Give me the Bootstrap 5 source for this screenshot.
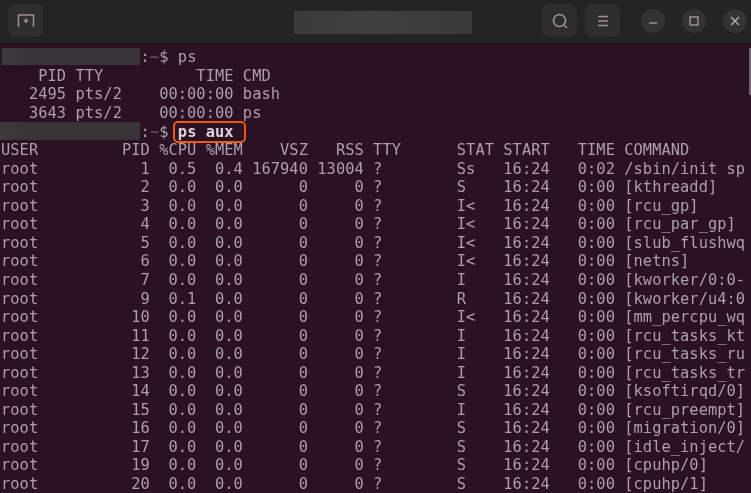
<!DOCTYPE html>
<html lang="en">
<head>
<meta charset="utf-8">
<title>Terminal</title>
<link rel="stylesheet" href="https://cdn.jsdelivr.net/npm/bootstrap@5.3.0/dist/css/bootstrap.min.css">
<style>
html,body{height:493px;overflow:hidden;background:#2b1124;}
.term-win{width:751px;height:493px;background:#2b1124;overflow:hidden;position:relative;}
.title-bar{height:44px;background:#242424;border-bottom:1px solid #1c1a1c;padding:4px 4px 0 8px;}
.tool-btn{width:35px;height:33px;border-radius:7px;background:#2e2e2e;}
.win-btn{width:24px;height:24px;border-radius:50%;background:#333333;margin-left:9px;}
.win-first{margin-left:13px;}
.title-mask{width:178px;height:23px;margin:7px 0 0 251px;background:linear-gradient(90deg,#3b3b3b,#3f3f3f 45%,#3a3a3a);}
.term-body{padding:4.4px 0 0 1px;height:449px;overflow:hidden;font-family:"DejaVu Sans Mono","Liberation Mono",monospace;font-size:15.36px;letter-spacing:.055px;line-height:18.56px;color:#ad9fab;filter:blur(.5px);}
.term-line{height:18.56px;white-space:pre;}
.prompt-gap{margin-left:139.6px;}
.dim-tilde{color:#6f5f6d;}
.mask-a{position:absolute;left:2px;top:48px;width:138px;height:17px;background:linear-gradient(90deg,#3d3a3c,#3a3337 25%,#3a3337);}
.mask-b{position:absolute;left:0;top:122px;width:140px;height:18px;background:linear-gradient(90deg,#3d3a3c,#3a3337 25%,#3a3337);}
.cmd-box{position:absolute;left:173px;top:121px;width:73px;height:22px;border:2px solid #f05a14;border-radius:5px;}
.cmd-hi{color:#ded3db;font-weight:700;}
.scroll-thumb{position:absolute;right:0;top:48px;width:2px;height:47px;background:#6d6670;}
</style>
</head>
<body>
<div class="term-win">
  <header class="title-bar d-flex align-items-start">
    <div class="tool-btn d-flex align-items-center justify-content-center">
      <svg width="20" height="18" viewBox="0 0 20 18" fill="none" stroke="#9e8f9a" stroke-width="1.5"><path d="M2.5 15V3h15v12"/><path d="M10 6.5v4.5M7.7 8.7h4.6"/></svg>
    </div>
    <div class="title-mask"></div>
    <div class="d-flex align-items-center gap-2 ms-auto">
      <div class="tool-btn d-flex align-items-center justify-content-center"><svg width="18" height="18" viewBox="0 0 18 18" fill="none" stroke="#a08f9b" stroke-width="1.6"><circle cx="8.5" cy="8.5" r="6"/><path d="M13 13l3 3"/></svg></div>
      <div class="tool-btn d-flex align-items-center justify-content-center"><svg width="14" height="14" viewBox="0 0 14 14" fill="none" stroke="#a08f9b" stroke-width="1.5"><path d="M2 2.5h10M2 7h10M2 11.5h10"/></svg></div>
      <div class="win-btn win-first d-flex align-items-center justify-content-center"><svg width="12" height="12" viewBox="0 0 12 12" fill="none" stroke="#a08f9b" stroke-width="1.5"><path d="M2 8h8"/></svg></div>
      <div class="win-btn d-flex align-items-center justify-content-center"><svg width="12" height="12" viewBox="0 0 12 12" fill="none" stroke="#a08f9b" stroke-width="1.5"><rect x="2" y="2" width="8" height="8"/></svg></div>
      <div class="win-btn d-flex align-items-center justify-content-center"><svg width="12" height="12" viewBox="0 0 12 12" fill="none" stroke="#b0a3ad" stroke-width="1.6"><path d="M2 2l8 8M10 2l-8 8"/></svg></div>
    </div>
  </header>
  <main class="term-body">
<div class="term-line d-flex"><span class="prompt-gap">:</span><span class="dim-tilde">~</span><span>$ ps</span></div>
<div class="term-line">    PID TTY          TIME CMD</div>
<div class="term-line">   2495 pts/2    00:00:00 bash</div>
<div class="term-line">   3643 pts/2    00:00:00 ps</div>
<div class="term-line d-flex"><span class="prompt-gap">:</span><span class="dim-tilde">~</span><span>$ </span><span class="cmd-hi">ps aux</span></div>
<div class="term-line">USER         PID %CPU %MEM    VSZ   RSS TTY      STAT START   TIME COMMAND</div>
<div class="term-line">root           1  0.5  0.4 167940 13004 ?        Ss   16:24   0:02 /sbin/init sp</div>
<div class="term-line">root           2  0.0  0.0      0     0 ?        S    16:24   0:00 [kthreadd]</div>
<div class="term-line">root           3  0.0  0.0      0     0 ?        I&lt;   16:24   0:00 [rcu_gp]</div>
<div class="term-line">root           4  0.0  0.0      0     0 ?        I&lt;   16:24   0:00 [rcu_par_gp]</div>
<div class="term-line">root           5  0.0  0.0      0     0 ?        I&lt;   16:24   0:00 [slub_flushwq</div>
<div class="term-line">root           6  0.0  0.0      0     0 ?        I&lt;   16:24   0:00 [netns]</div>
<div class="term-line">root           7  0.0  0.0      0     0 ?        I    16:24   0:00 [kworker/0:0-</div>
<div class="term-line">root           9  0.1  0.0      0     0 ?        R    16:24   0:00 [kworker/u4:0</div>
<div class="term-line">root          10  0.0  0.0      0     0 ?        I&lt;   16:24   0:00 [mm_percpu_wq</div>
<div class="term-line">root          11  0.0  0.0      0     0 ?        I    16:24   0:00 [rcu_tasks_kt</div>
<div class="term-line">root          12  0.0  0.0      0     0 ?        I    16:24   0:00 [rcu_tasks_ru</div>
<div class="term-line">root          13  0.0  0.0      0     0 ?        I    16:24   0:00 [rcu_tasks_tr</div>
<div class="term-line">root          14  0.0  0.0      0     0 ?        S    16:24   0:00 [ksoftirqd/0]</div>
<div class="term-line">root          15  0.0  0.0      0     0 ?        I    16:24   0:00 [rcu_preempt]</div>
<div class="term-line">root          16  0.0  0.0      0     0 ?        S    16:24   0:00 [migration/0]</div>
<div class="term-line">root          17  0.0  0.0      0     0 ?        S    16:24   0:00 [idle_inject/</div>
<div class="term-line">root          19  0.0  0.0      0     0 ?        S    16:24   0:00 [cpuhp/0]</div>
<div class="term-line">root          20  0.0  0.0      0     0 ?        S    16:24   0:00 [cpuhp/1]</div>
  </main>
  <div class="mask-a"></div>
  <div class="mask-b"></div>
  <div class="cmd-box"></div>
  <div class="scroll-thumb"></div>
</div>
<script src="https://cdn.jsdelivr.net/npm/bootstrap@5.3.0/dist/js/bootstrap.bundle.min.js"></script>
</body>
</html>
